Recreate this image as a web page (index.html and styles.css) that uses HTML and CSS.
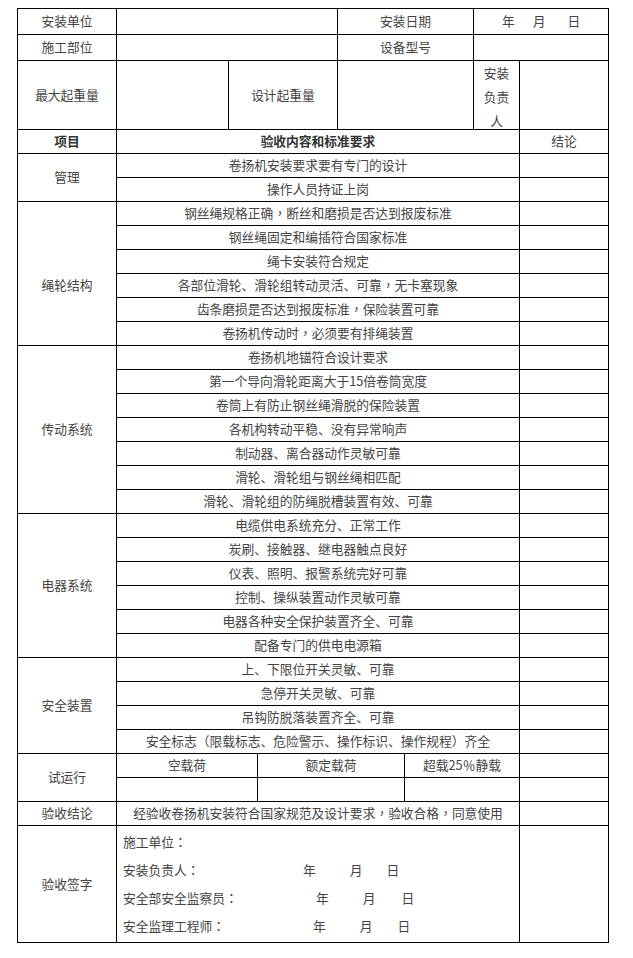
FILE: index.html
```html
<!DOCTYPE html>
<html lang="zh-CN">
<head>
<meta charset="utf-8">
<title>卷扬机安装验收表</title>
<link rel="stylesheet" href="styles.css">
</head>
<body>
<div class="sheet">
  <!-- row 1 -->
  <div class="cell">安装单位</div>
  <div class="cell span3"></div>
  <div class="cell span2">安装日期</div>
  <div class="cell span2 ymd"><span>年</span><span class="ymd-m">月</span><span class="ymd-d">日</span></div>
  <!-- row 2 -->
  <div class="cell">施工部位</div>
  <div class="cell span3"></div>
  <div class="cell span2">设备型号</div>
  <div class="cell span2"></div>
  <!-- row 3 -->
  <div class="cell">最大起重量</div>
  <div class="cell"></div>
  <div class="cell span2">设计起重量</div>
  <div class="cell span2"></div>
  <div class="cell stack">安装<br>负责<br>人</div>
  <div class="cell"></div>
  <!-- row 4 -->
  <div class="cell bold">项目</div>
  <div class="cell span6 bold">验收内容和标准要求</div>
  <div class="cell">结论</div>

  <!-- 管理 -->
  <div class="cell rows2">管理</div>
  <div class="cell span6">卷扬机安装要求要有专门的设计</div><div class="cell"></div>
  <div class="cell span6">操作人员持证上岗</div><div class="cell"></div>

  <!-- 绳轮结构 -->
  <div class="cell rows6 low">绳轮结构</div>
  <div class="cell span6">钢丝绳规格正确<span class="pc">，</span>断丝和磨损是否达到报废标准</div><div class="cell"></div>
  <div class="cell span6">钢丝绳固定和编插符合国家标准</div><div class="cell"></div>
  <div class="cell span6">绳卡安装符合规定</div><div class="cell"></div>
  <div class="cell span6">各部位滑轮、滑轮组转动灵活、可靠<span class="pc">，</span>无卡塞现象</div><div class="cell"></div>
  <div class="cell span6">齿条磨损是否达到报废标准<span class="pc">，</span>保险装置可靠</div><div class="cell"></div>
  <div class="cell span6">卷扬机传动时<span class="pc">，</span>必须要有排绳装置</div><div class="cell"></div>

  <!-- 传动系统 -->
  <div class="cell rows7">传动系统</div>
  <div class="cell span6">卷扬机地锚符合设计要求</div><div class="cell"></div>
  <div class="cell span6">第一个导向滑轮距离大于15倍卷筒宽度</div><div class="cell"></div>
  <div class="cell span6">卷筒上有防止钢丝绳滑脱的保险装置</div><div class="cell"></div>
  <div class="cell span6">各机构转动平稳、没有异常响声</div><div class="cell"></div>
  <div class="cell span6">制动器、离合器动作灵敏可靠</div><div class="cell"></div>
  <div class="cell span6">滑轮、滑轮组与钢丝绳相匹配</div><div class="cell"></div>
  <div class="cell span6">滑轮、滑轮组的防绳脱槽装置有效、可靠</div><div class="cell"></div>

  <!-- 电器系统 -->
  <div class="cell rows6">电器系统</div>
  <div class="cell span6">电缆供电系统充分、正常工作</div><div class="cell"></div>
  <div class="cell span6">炭刷、接触器、继电器触点良好</div><div class="cell"></div>
  <div class="cell span6">仪表、照明、报警系统完好可靠</div><div class="cell"></div>
  <div class="cell span6">控制、操纵装置动作灵敏可靠</div><div class="cell"></div>
  <div class="cell span6">电器各种安全保护装置齐全、可靠</div><div class="cell"></div>
  <div class="cell span6">配备专门的供电电源箱</div><div class="cell"></div>

  <!-- 安全装置 -->
  <div class="cell rows4">安全装置</div>
  <div class="cell span6">上、下限位开关灵敏、可靠</div><div class="cell"></div>
  <div class="cell span6">急停开关灵敏、可靠</div><div class="cell"></div>
  <div class="cell span6">吊钩防脱落装置齐全、可靠</div><div class="cell"></div>
  <div class="cell span6">安全标志（限载标志、危险警示、操作标识、操作规程）齐全</div><div class="cell"></div>

  <!-- 试运行 -->
  <div class="cell rows2">试运行</div>
  <div class="cell span2">空载荷</div>
  <div class="cell span2">额定载荷</div>
  <div class="cell span2">超载25<span class="pc">％</span>静载</div>
  <div class="cell"></div>
  <div class="cell span2"></div>
  <div class="cell span2"></div>
  <div class="cell span2"></div>
  <div class="cell"></div>

  <!-- 验收结论 -->
  <div class="cell">验收结论</div>
  <div class="cell span6">经验收卷扬机安装符合国家规范及设计要求<span class="pc">，</span>验收合格<span class="pc">，</span>同意使用</div>
  <div class="cell"></div>

  <!-- 验收签字 -->
  <div class="cell">验收签字</div>
  <div class="cell span6 sign">
    <div class="sig-line"><span class="sig-label">施工单位<span class="pc">：</span></span></div>
    <div class="sig-line"><span class="sig-label sig-a">安装负责人<span class="pc">：</span></span><span>年</span><span class="sig-m">月</span><span class="sig-d">日</span></div>
    <div class="sig-line"><span class="sig-label sig-b">安全部安全监察员<span class="pc">：</span></span><span>年</span><span class="sig-m">月</span><span class="sig-d2">日</span></div>
    <div class="sig-line"><span class="sig-label sig-c">安全监理工程师<span class="pc">：</span></span><span>年</span><span class="sig-m">月</span><span class="sig-d3">日</span></div>
  </div>
  <div class="cell"></div>
</div>
</body>
</html>
```

FILE: styles.css
```css
html, body {
  margin: 0;
  padding: 0;
  background: #fff;
}

body {
  padding: 8px 0 0 17px;
  font-family: "Noto Sans CJK SC", "Noto Sans", sans-serif;
  font-size: 12.75px;
  color: #444;
}

.sheet {
  display: grid;
  width: 590px;
  grid-template-columns: 98px 111px 28px 79px 66px 68px 45px 88px;
  grid-template-rows: 25px 25px 68px 23px repeat(25, 23px) 23px 23px 23px 116px;
  gap: 1px;
  padding: 1px;
  background: #000;
}

.cell {
  background: #fff;
  display: flex;
  align-items: center;
  justify-content: center;
  text-align: center;
  white-space: nowrap;
  line-height: 1;
  min-width: 0;
}

.span2 { grid-column: span 2; }
.span3 { grid-column: span 3; }
.span6 { grid-column: span 6; }
.rows2 { grid-row: span 2; }
.rows4 { grid-row: span 4; }
.rows6 { grid-row: span 6; }
.rows7 { grid-row: span 7; }

.bold { font-weight: 700; color: #333; }

.low { padding-top: 24px; }

.pc {
  display: inline-block;
  width: 1em;
  text-align: center;
  font-family: "Noto Sans CJK TC", "Noto Sans CJK SC", sans-serif;
}

.stack {
  align-items: flex-start;
  line-height: 24px;
  white-space: normal;
  overflow: visible;
}

.ymd span { display: inline-block; }
.ymd-m { margin-left: 18px; }
.ymd-d { margin-left: 22px; }

.sign {
  flex-direction: column;
  align-items: stretch;
  justify-content: center;
  padding-left: 6px;
  text-align: left;
}

.sig-line {
  display: flex;
  align-items: center;
  height: 28px;
}

.sig-label { display: inline-block; }
.sig-a { width: 180px; }
.sig-b { width: 193px; }
.sig-c { width: 190px; }
.sig-m { margin-left: 34px; }
.sig-d { margin-left: 24px; }
.sig-d2 { margin-left: 26px; }
.sig-d3 { margin-left: 25px; }
```
